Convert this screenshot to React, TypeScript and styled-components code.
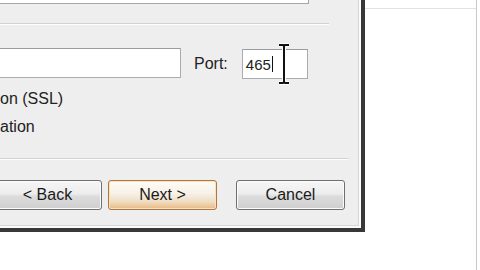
import styled, { createGlobalStyle } from "styled-components";

const GlobalStyle = createGlobalStyle`
  html, body {
    margin: 0;
    padding: 0;
    background: #fff;
    overflow: hidden;
  }
  body {
    font-family: "Liberation Sans", Arial, sans-serif;
    color: #1e1e1e;
  }
`;

const Screen = styled.div`
  display: flex;
  width: 480px;
  height: 270px;
  background: #fff;
  overflow: hidden;
`;

const LeftColumn = styled.div`
  display: flex;
  flex-direction: column;
  width: 365px;
`;

const Dialog = styled.div`
  box-sizing: border-box;
  width: 365px;
  height: 232px;
  background: #eeeeee;
  border-right: 4px solid #383838;
  border-bottom: 4px solid #383838;
  box-shadow: inset -2px -2px 0 #fbfbfb, inset -3px -3px 0 #d6d6d6;
  display: flex;
  flex-direction: column;
  overflow: hidden;
`;

const TopField = styled.div`
  box-sizing: border-box;
  margin-left: -1px;
  width: 310px;
  height: 4px;
  background: #fff;
  border: 1px solid #a6a6a6;
  border-top: none;
`;

const Separator = styled.div<{ $width: number; $gap: number }>`
  box-sizing: border-box;
  width: ${(p) => p.$width}px;
  height: 2px;
  margin-top: ${(p) => p.$gap}px;
  border-top: 1px solid #d2d2d2;
  border-bottom: 1px solid #fdfdfd;
`;

const ServerRow = styled.div`
  display: flex;
  align-items: flex-start;
  margin-top: 23px;
  margin-left: -20px;
  height: 31px;
`;

const Field = styled.div<{ $width: number; $offset?: number }>`
  position: relative;
  box-sizing: border-box;
  width: ${(p) => p.$width}px;
  height: 30px;
  margin-top: ${(p) => p.$offset ?? 0}px;
  background: #fff;
  border: 1px solid #a9abb0;
  border-top-color: #9a9ca2;
  display: flex;
  align-items: center;
  padding-left: 3px;
  font-size: 15px;
  color: #222;
`;

const Label = styled.span`
  font-size: 16px;
  line-height: 18px;
  margin: 7px 14px 0 13px;
  color: #222;
`;

const Caret = styled.span`
  display: inline-block;
  width: 1px;
  height: 16px;
  margin-left: 1px;
  background: #111;
`;

const Cursor = styled.svg`
  position: absolute;
  left: 35px;
  top: -7px;
`;

const OptionText = styled.div<{ $gap: number }>`
  font-size: 16px;
  line-height: 18px;
  margin-top: ${(p) => p.$gap}px;
  white-space: nowrap;
  color: #222;
`;

const ButtonRow = styled.div`
  display: flex;
  margin-top: 20px;
  margin-left: -7px;
`;

const Button = styled.button<{ $default?: boolean; $gap?: number }>`
  box-sizing: border-box;
  width: 109px;
  height: 30px;
  margin-left: ${(p) => p.$gap ?? 0}px;
  padding: 0;
  font-family: "Liberation Sans", Arial, sans-serif;
  font-size: 16px;
  color: #1a1a1a;
  border-radius: 3px;
  border: 1px solid ${(p) => (p.$default ? "#b0763a" : "#6f6f6f")};
  background: ${(p) =>
    p.$default
      ? "linear-gradient(#fdfbf6 0%, #f7f1e8 45%, #efdcc0 75%, #e8b882 100%)"
      : "linear-gradient(#f6f6f6 0%, #ededed 45%, #dcdcdc 55%, #cfcfcf 100%)"};
  box-shadow: inset 0 0 0 1px
    ${(p) => (p.$default ? "#f8e2bf" : "#fbfbfb")};
`;

const RightPane = styled.div`
  box-sizing: border-box;
  width: 112px;
  height: 270px;
  background: #fff;
  border-right: 1px solid #c9c9c9;
`;

const PaneHeader = styled.div`
  height: 8px;
  border-bottom: 1px solid #e2e2e2;
  background: #fff;
`;

function IBeam() {
  return (
    <Cursor width="12" height="42" viewBox="0 0 12 42">
      <path
        d="M1 2 H5 L6 3 L7 2 H11 M6 3 V39 M1 40 H5 L6 39 L7 40 H11"
        fill="none"
        stroke="#fff"
        strokeWidth="4"
      />
      <path
        d="M1 2 H5 L6 3 L7 2 H11 M6 3 V39 M1 40 H5 L6 39 L7 40 H11"
        fill="none"
        stroke="#111"
        strokeWidth="2"
      />
    </Cursor>
  );
}

export default function App() {
  return (
    <>
      <GlobalStyle />
      <Screen>
        <LeftColumn>
          <Dialog>
            <TopField />
            <Separator $width={329} $gap={19} />
            <ServerRow>
              <Field $width={201} />
              <Label>Port:</Label>
              <Field $width={66} $offset={1}>
                465
                <Caret />
                <IBeam />
              </Field>
            </ServerRow>
            <OptionText $gap={11}>on (SSL)</OptionText>
            <OptionText $gap={10}>ation</OptionText>
            <Separator $width={348} $gap={22} />
            <ButtonRow>
              <Button>&lt; Back</Button>
              <Button $default $gap={6}>
                Next &gt;
              </Button>
              <Button $gap={19}>Cancel</Button>
            </ButtonRow>
          </Dialog>
        </LeftColumn>
        <RightPane>
          <PaneHeader />
        </RightPane>
      </Screen>
    </>
  );
}
